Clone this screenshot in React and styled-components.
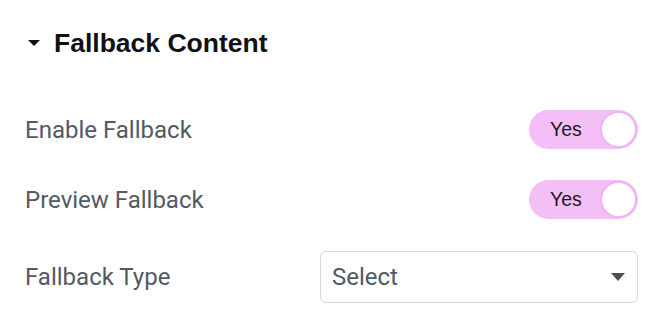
import React from 'react';
import styled, { createGlobalStyle } from 'styled-components';

const GlobalStyle = createGlobalStyle`
  body {
    margin: 0;
    background: #ffffff;
  }
`;

const Panel = styled.div`
  display: flex;
  flex-direction: column;
  width: 658px;
  height: 322px;
  box-sizing: border-box;
  padding: 23px 20px 0 25px;
  font-family: Roboto, 'Noto Sans', sans-serif;
`;

const Heading = styled.div`
  display: flex;
  align-items: center;
  gap: 14px;
  height: 40px;
  margin-left: 3px;
  margin-bottom: 47px;
  font-family: 'Liberation Sans', Arial, sans-serif;
  font-weight: 700;
  font-size: 26.5px;
  color: #111111;
`;

const Caret = styled.span`
  width: 0;
  height: 0;
  border-left: 6.5px solid transparent;
  border-right: 6.5px solid transparent;
  border-top: 6px solid #111111;
`;

const Row = styled.div`
  display: flex;
  align-items: center;
  justify-content: space-between;
  margin-bottom: ${({ $gap }) => $gap}px;
`;

const Label = styled.span`
  font-size: 24px;
  color: #535a63;
`;

const Toggle = styled.div`
  display: flex;
  align-items: center;
  justify-content: space-between;
  width: 109px;
  height: 39px;
  box-sizing: border-box;
  padding: 0 1px 0 21px;
  border-radius: 20px;
  background: #f4bff7;
  font-family: 'Liberation Sans', Arial, sans-serif;
  font-size: 19.5px;
  color: #1a1a1a;
`;

const Knob = styled.span`
  width: 37px;
  height: 37px;
  box-sizing: border-box;
  border-radius: 50%;
  background: #ffffff;
  border: 2px solid #eeb4f1;
`;

const Select = styled.div`
  display: flex;
  align-items: center;
  justify-content: space-between;
  width: 318px;
  height: 52px;
  box-sizing: border-box;
  padding: 0 12px 0 11px;
  border: 1.5px solid #d5d8dc;
  border-radius: 6px;
  font-size: 24px;
  color: #515962;
`;

const Arrow = styled.span`
  width: 0;
  height: 0;
  border-left: 7.5px solid transparent;
  border-right: 7.5px solid transparent;
  border-top: 8px solid #4b5058;
`;

const App = () => (
  <Panel>
    <GlobalStyle />
    <Heading>
      <Caret />
      Fallback Content
    </Heading>
    <Row $gap={31}>
      <Label>Enable Fallback</Label>
      <Toggle>
        Yes
        <Knob />
      </Toggle>
    </Row>
    <Row $gap={32}>
      <Label>Preview Fallback</Label>
      <Toggle>
        Yes
        <Knob />
      </Toggle>
    </Row>
    <Row $gap={0}>
      <Label>Fallback Type</Label>
      <Select>
        Select
        <Arrow />
      </Select>
    </Row>
  </Panel>
);

export default App;
